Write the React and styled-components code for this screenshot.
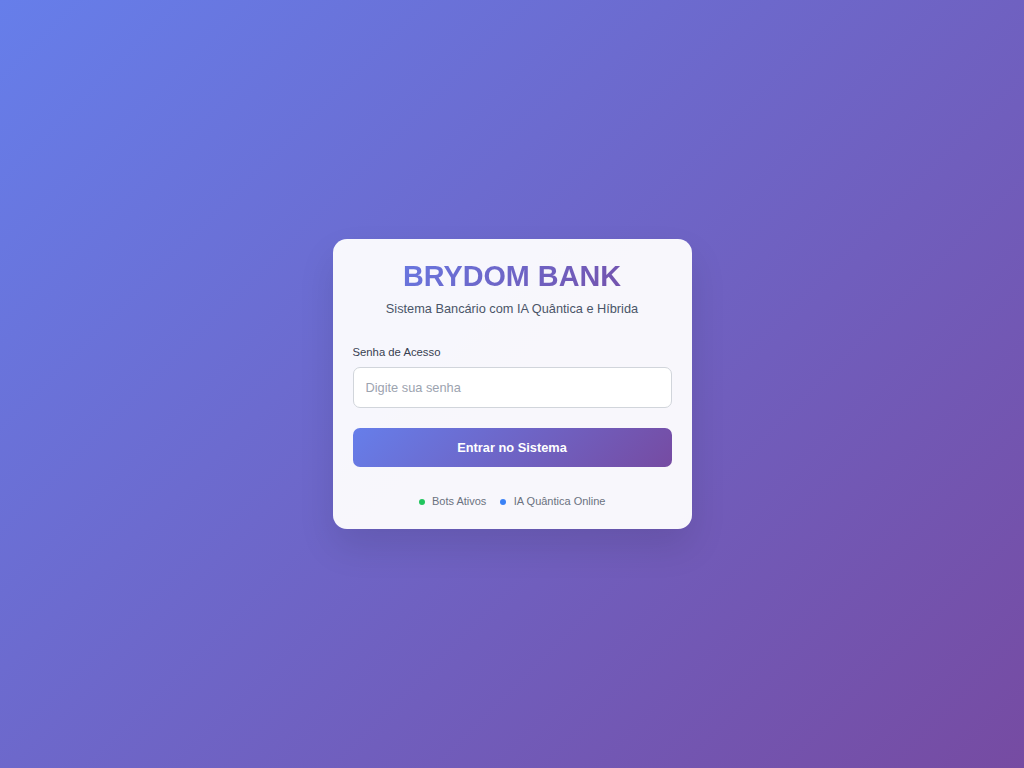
import React from "react";
import styled, { createGlobalStyle } from "styled-components";

const GlobalStyle = createGlobalStyle`
  * { box-sizing: border-box; }
  html, body { margin: 0; padding: 0; }
  body {
    font-family: "Liberation Sans", Arial, sans-serif;
    background: linear-gradient(135deg, #667eea 0%, #764ba2 100%);
    min-height: 100vh;
  }
`;

const Page = styled.div`
  min-height: 100vh;
  display: flex;
  align-items: center;
  justify-content: center;
`;

const Card = styled.div`
  width: 359px;
  background: rgba(255, 255, 255, 0.95);
  border-radius: 14px;
  padding: 23px 20px 20.5px;
  box-shadow: 0 18px 36px rgba(0, 0, 0, 0.1);
  display: flex;
  flex-direction: column;
`;

const Title = styled.h1`
  margin: 0 0 9.6px;
  font-size: 28.8px;
  line-height: 29px;
  font-weight: 700;
  text-align: center;
  background: linear-gradient(135deg, #667eea 0%, #764ba2 100%);
  -webkit-background-clip: text;
  background-clip: text;
  color: transparent;
`;

const Subtitle = styled.p`
  margin: 0 0 29.9px;
  font-size: 12.75px;
  line-height: 15px;
  color: #4a5568;
  text-align: center;
`;

const Label = styled.label`
  display: block;
  margin: 0 0 8.8px;
  font-size: 11.3px;
  line-height: 13px;
  color: #374151;
`;

const Input = styled.input`
  width: 100%;
  height: 40.4px;
  padding: 0 12px;
  border: 1px solid #d1d5db;
  border-radius: 7px;
  background: #ffffff;
  font-family: inherit;
  font-size: 12.8px;
  color: #1f2937;
  outline: none;
  &::placeholder { color: #9ca3af; }
`;

const Button = styled.button`
  margin-top: 20px;
  width: 100%;
  height: 39px;
  border: none;
  border-radius: 7px;
  background: linear-gradient(135deg, #667eea 0%, #764ba2 100%);
  color: #ffffff;
  font-family: inherit;
  font-size: 12.8px;
  font-weight: 700;
  cursor: pointer;
`;

const StatusRow = styled.div`
  margin-top: 28.8px;
  display: flex;
  justify-content: center;
  gap: 14px;
  font-size: 11px;
  line-height: 13px;
  color: #6b7280;
`;

const StatusItem = styled.span`
  display: inline-flex;
  align-items: center;
`;

const Dot = styled.span`
  width: 6px;
  height: 6px;
  border-radius: 50%;
  margin-right: 7.4px;
  background: ${(p) => p.$color};
`;

export default function App() {
  return (
    <>
      <GlobalStyle />
      <Page>
        <Card>
          <Title>BRYDOM BANK</Title>
          <Subtitle>Sistema Bancário com IA Quântica e Híbrida</Subtitle>
          <Label htmlFor="senha">Senha de Acesso</Label>
          <Input id="senha" type="password" placeholder="Digite sua senha" />
          <Button type="button">Entrar no Sistema</Button>
          <StatusRow>
            <StatusItem>
              <Dot $color="#22c55e" />
              Bots Ativos
            </StatusItem>
            <StatusItem>
              <Dot $color="#3b82f6" />
              IA Quântica Online
            </StatusItem>
          </StatusRow>
        </Card>
      </Page>
    </>
  );
}
